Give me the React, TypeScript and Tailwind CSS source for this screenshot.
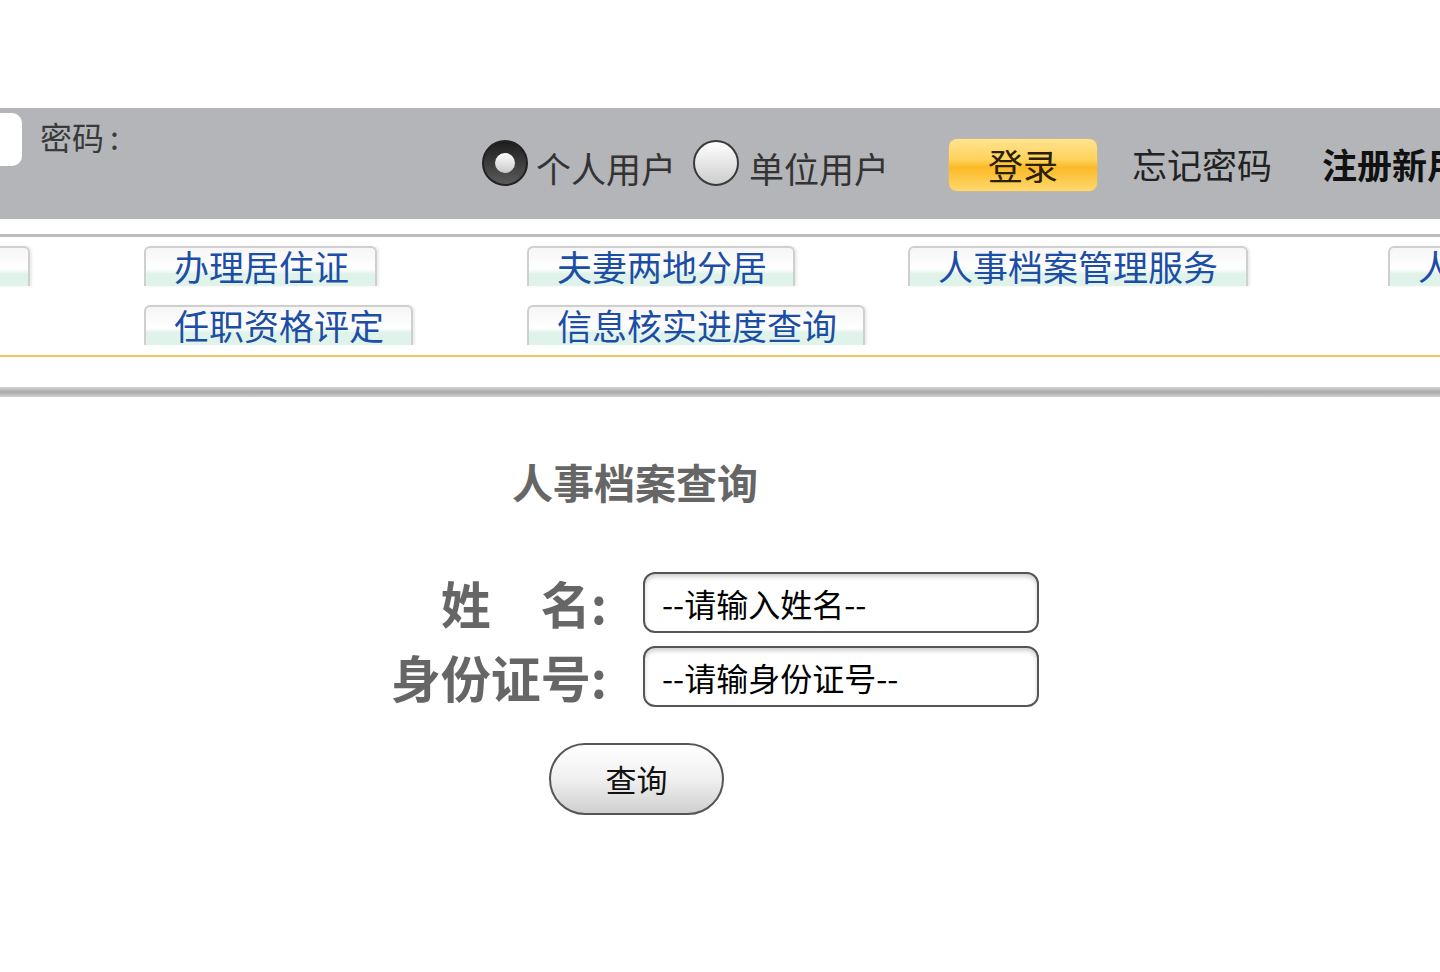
const font = { fontFamily: '"Noto Sans CJK SC", "Noto Sans", sans-serif' };

const tabRow1 = [
    { text: '', w: 'w-[230px]', cell: 'w-[144px]', pull: true },
    { text: '办理居住证', w: 'w-[233px]', cell: 'w-[383px]' },
    { text: '夫妻两地分居', w: 'w-[268px]', cell: 'w-[381px]' },
    { text: '人事档案管理服务', w: 'w-[340px]', cell: 'w-[480px]' },
    { text: '人事代理', w: 'w-[260px]', cell: 'w-[300px]' },
];

const tabRow2 = [
    { text: '', w: '', cell: 'w-[144px]' },
    { text: '任职资格评定', w: 'w-[269px]', cell: 'w-[383px]' },
    { text: '信息核实进度查询', w: 'w-[338px]', cell: 'w-[381px]' },
];

const Tab = ({ text, w, pull }: { text: string; w: string; pull?: boolean }) => (
    <div className={`${w} ${pull ? 'ml-[-200px]' : ''} h-[40px] shrink-0 rounded-t-[6px] border-2 border-b-0 border-[#cfcfcf] bg-[linear-gradient(to_bottom,#f6f6f6_0%,#ffffff_55%,#dff3ea_68%,#dff3ea_100%)] pl-[28px] text-[35px] leading-[36px] text-[#1d4ea6] whitespace-nowrap shadow-[2px_0_2px_rgba(0,0,0,0.08)]`}>
        {text}
    </div>
);

const Radio = ({ checked }: { checked?: boolean }) =>
    checked ? (
        <div className="w-[46px] h-[46px] shrink-0 rounded-full bg-[linear-gradient(to_bottom,#1e1e1e,#5a5a5a)] border-2 border-[#222] flex items-center justify-center">
            <div className="w-[20px] h-[20px] rounded-full bg-[linear-gradient(to_bottom,#ffffff,#c8c8c8)]"></div>
        </div>
    ) : (
        <div className="w-[46px] h-[46px] shrink-0 rounded-full border-2 border-[#3a3a3a] bg-[linear-gradient(to_bottom,#ffffff,#cdcdcd)]"></div>
    );

export default function App() {
    return <div style={font} className="w-[1440px] h-[972px] overflow-hidden bg-white">
        <div className="h-[108px]"></div>

        {/* login bar */}
        <div className="h-[111px] bg-[#b3b5b8] flex items-start">
            <div className="w-[22px] h-[53px] mt-[5px] bg-white rounded-r-[10px] shrink-0"></div>
            <div className="ml-[18px] mt-[8px] w-[442px] shrink-0 text-[32px] leading-[40px] text-[#3a3a3a]">密码<span className="ml-[6px]">:</span></div>
            <div className="mt-[30px] w-[467px] shrink-0 flex items-center">
                <Radio checked />
                <span className="ml-[8px] mt-[10px] text-[35px] leading-[40px] text-[#333]">个人用户</span>
                <div className="ml-[17px]"><Radio /></div>
                <span className="ml-[10px] mt-[10px] text-[35px] leading-[40px] text-[#333]">单位用户</span>
            </div>
            <div className="mt-[31px] w-[148px] h-[52px] shrink-0 rounded-[8px] bg-[linear-gradient(to_bottom,#ffe391_0%,#ffd35a_40%,#fbb928_55%,#ffd96e_100%)] shadow-[0_0_2px_rgba(255,200,80,0.8)] flex items-center justify-center text-[35px] text-[#2a2100]">
                登录
            </div>
            <div className="ml-[35px] mt-[31px] shrink-0 text-[35px] leading-[50px] text-[#222]">忘记密码</div>
            <div className="ml-[50px] mt-[31px] shrink-0 whitespace-nowrap text-[35px] leading-[50px] font-bold text-[#111]">注册新用户</div>
        </div>

        <div className="h-[15px]"></div>
        <div className="h-[3px] bg-[#bdbdbd]"></div>

        {/* service tabs */}
        <div className="pt-[9px] overflow-hidden">
            <div className="flex">
                {tabRow1.map((t, i) => (
                    <div key={i} className={`${t.cell} shrink-0 flex`}>
                        <Tab text={t.text} w={t.w} pull={t.pull} />
                    </div>
                ))}
            </div>
            <div className="flex mt-[19px]">
                {tabRow2.map((t, i) => (
                    <div key={i} className={`${t.cell} shrink-0 flex`}>
                        {t.text && <Tab text={t.text} w={t.w} />}
                    </div>
                ))}
            </div>
        </div>
        <div className="mt-[10px] h-[2px] bg-[#f1c466]"></div>
        <div className="h-[30px]"></div>
        <div className="h-[10px] bg-[linear-gradient(to_bottom,#d6d6d6,#a9a9a9_50%,#cfcfcf)]"></div>

        {/* query form */}
        <div className="w-[1270px] text-center mt-[59px] text-[41px] leading-[50px] font-bold text-[#666]">人事档案查询</div>

        <div className="mt-[66px] flex flex-col gap-[13px]">
            {[
                { label: <><span>姓</span><span className="w-[50px] inline-block"></span><span>名:</span></>, ph: '--请输入姓名--' },
                { label: <span>身份证号:</span>, ph: '--请输身份证号--' },
            ].map((row, i) => (
                <div key={i} className="flex items-center">
                    <div className="w-[607px] flex justify-end text-[50px] leading-[61px] font-bold text-[#666]">{row.label}</div>
                    <input
                        placeholder={row.ph}
                        className="ml-[36px] w-[396px] h-[61px] rounded-[12px] border-2 border-[#555] bg-white px-[17px] text-[32px] text-black placeholder:text-black shadow-[inset_0_3px_4px_rgba(0,0,0,0.18)] outline-none"
                    />
                </div>
            ))}
        </div>

        <div className="mt-[36px] ml-[549px] w-[175px] h-[72px] rounded-full border-2 border-[#555] bg-[linear-gradient(to_bottom,#ffffff,#f0f0f0_50%,#cfcfcf)] flex items-center justify-center text-[31px] text-[#111]">
            查询
        </div>
    </div>;
}
